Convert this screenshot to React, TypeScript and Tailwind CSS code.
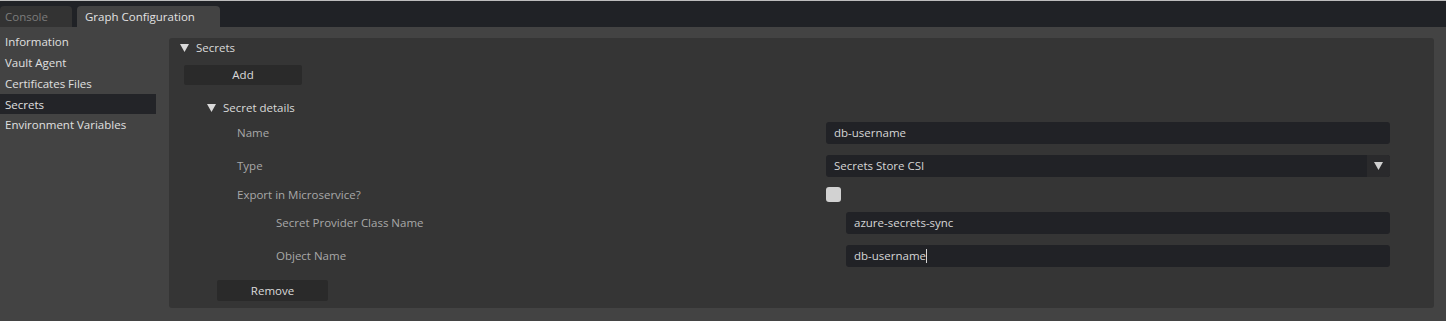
import React from "react";

const Tri = ({ className = "" }: { className?: string }) => (
  <svg width="9" height="8" viewBox="0 0 9 8" className={className}>
    <polygon points="0,0 9,0 4.5,8" fill="currentColor" />
  </svg>
);

const Input = ({ value, caret = false }: { value: string; caret?: boolean }) => (
  <div className="flex-1 h-[22px] bg-[#212226] rounded-[3px] flex items-center pl-[8px] text-[#d6d6d6]">
    <span>{value}</span>
    {caret && <span className="w-[1px] h-[14px] bg-[#d6d6d6]" />}
  </div>
);

export default function App() {
  return (
    <div
      className="w-[1446px] h-[321px] bg-[#434343] flex flex-col text-[11.5px] leading-none"
      style={{ fontFamily: '"Open Sans", "Noto Sans", sans-serif' }}
    >
      <div className="h-[27px] bg-[#202226] border-t border-[#bdbdbd] flex items-end gap-[5px] shrink-0">
        <div className="w-[72px] h-[21px] bg-[#333333] rounded-t-[4px] flex items-center pl-[5px] text-[#7c7c7c]">
          Console
        </div>
        <div className="w-[143px] h-[21px] bg-[#434343] rounded-t-[4px] flex items-center pl-[8px] text-[#e2e2e2]">
          Graph Configuration
        </div>
      </div>
      <div className="flex flex-1">
        <div className="w-[156px] pt-[5px] flex flex-col gap-[0.75px] text-[#e0e0e0] shrink-0">
          {["Information", "Vault Agent", "Certificates Files", "Secrets", "Environment Variables"].map((t) => (
            <div
              key={t}
              className={`h-[20px] flex items-center pl-[5px] ${t === "Secrets" ? "bg-[#232428]" : ""}`}
            >
              {t}
            </div>
          ))}
        </div>
        <div className="flex-1 pl-[13px] pr-[12px] pt-[11px] pb-[13px]">
          <div className="h-full bg-[#353535] rounded-[3px] flex flex-col">
            <div className="h-[20px] flex items-center pl-[11px] gap-[7px] text-[#dadada]">
              <Tri className="text-[#dadada]" />
              <span>Secrets</span>
            </div>
            <div className="pl-[15px] pr-[44px] flex flex-col">
              <div className="mt-[7px] w-[118px] h-[20px] bg-[#2a2a2a] rounded-[2px] flex items-center justify-center text-[#dadada]">
                Add
              </div>
              <div className="mt-[13px] h-[20px] flex items-center pl-[23px] gap-[7px] text-[#dadada]">
                <Tri className="text-[#dadada]" />
                <span>Secret details</span>
              </div>
              <div className="mt-[4px] flex items-center text-[#a8a8a8]">
                <div className="w-[642px] pl-[53px]">Name</div>
                <Input value="db-username" />
              </div>
              <div className="mt-[11px] flex items-center text-[#a8a8a8]">
                <div className="w-[642px] pl-[53px]">Type</div>
                <div className="flex-1 h-[22px] bg-[#212226] rounded-[3px] flex items-center text-[#d6d6d6]">
                  <span className="flex-1 pl-[8px]">Secrets Store CSI</span>
                  <div className="w-[23px] h-full bg-[#2a2a2c] rounded-r-[3px] flex items-center justify-center">
                    <Tri className="text-[#d0d0d0]" />
                  </div>
                </div>
              </div>
              <div className="mt-[10px] h-[15px] flex items-center text-[#a8a8a8]">
                <div className="w-[642px] pl-[53px]">Export in Microservice?</div>
                <div className="w-[15px] h-[15px] bg-[#d2d2d2] rounded-[3px]" />
              </div>
              <div className="mt-[10px] flex items-center text-[#a8a8a8]">
                <div className="w-[662px] pl-[92px]">Secret Provider Class Name</div>
                <Input value="azure-secrets-sync" />
              </div>
              <div className="mt-[11px] flex items-center text-[#a8a8a8]">
                <div className="w-[662px] pl-[92px]">Object Name</div>
                <Input value="db-username" caret />
              </div>
              <div className="mt-[13px] ml-[33px] w-[111px] h-[21px] bg-[#2a2a2a] rounded-[2px] flex items-center justify-center text-[#dadada]">
                Remove
              </div>
            </div>
          </div>
        </div>
      </div>
    </div>
  );
}
